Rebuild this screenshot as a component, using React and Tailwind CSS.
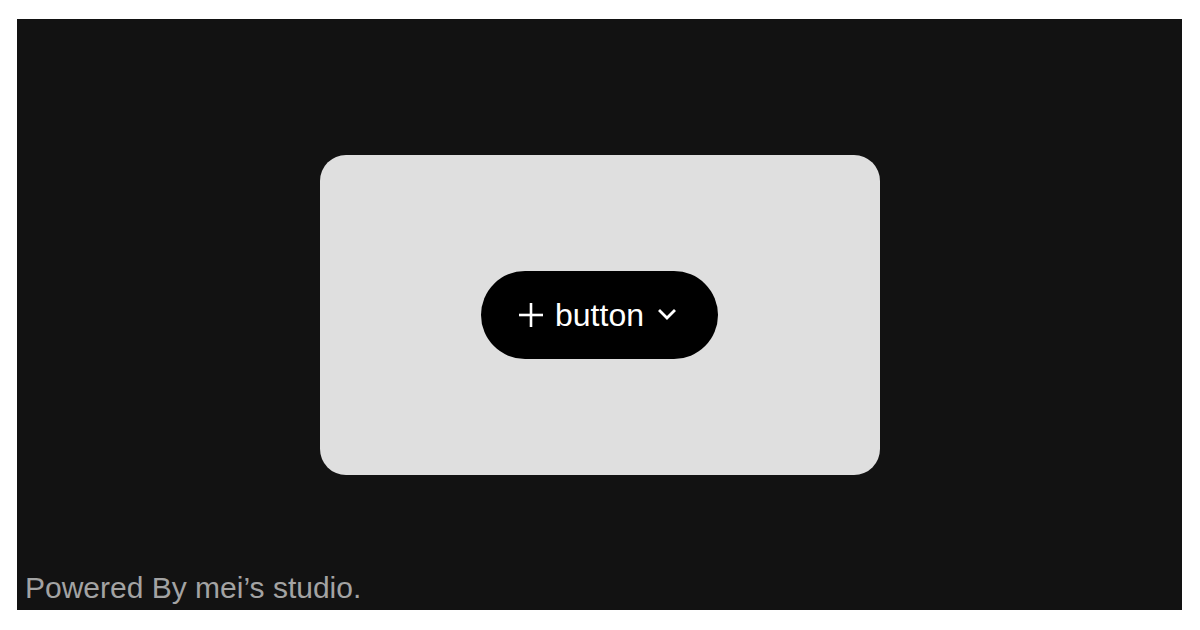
import React from 'react';

const PlusIcon = () => (
  <svg width="24" height="24" viewBox="0 0 24 24" fill="none" stroke="currentColor" strokeWidth="2.6">
    <line x1="12" y1="0" x2="12" y2="24" />
    <line x1="0" y1="12" x2="24" y2="12" />
  </svg>
);

const ChevronIcon = () => (
  <svg width="20" height="13" viewBox="0 0 20 13" fill="none" stroke="currentColor" strokeWidth="2.8" strokeLinecap="square">
    <polyline points="3,3 10,10 17,3" />
  </svg>
);

const App = () => {
  return (
    <div className="bg-white h-screen pt-[19px] pl-[17px] pr-[18px]" style={{ fontFamily: '"Liberation Sans", Arial, sans-serif' }}>
      <div className="bg-[#121212] h-[591px] grid">
        <div className="col-start-1 row-start-1 place-self-center w-[560px] h-[320px] rounded-[26px] bg-[#dfdfdf] flex items-center justify-center">
          <button className="h-[88px] rounded-full bg-black text-white flex items-center pl-[38px] pr-[41px]">
            <PlusIcon />
            <span className="ml-[12px] text-[32px] leading-normal">button</span>
            <span className="ml-[13px] flex"><ChevronIcon /></span>
          </button>
        </div>
        <div className="col-start-1 row-start-1 self-end justify-self-start pl-[8px] pb-0 text-[30px] leading-normal text-[#a3a3a3]">
          Powered By mei’s studio.
        </div>
      </div>
    </div>
  );
};

export default App;
